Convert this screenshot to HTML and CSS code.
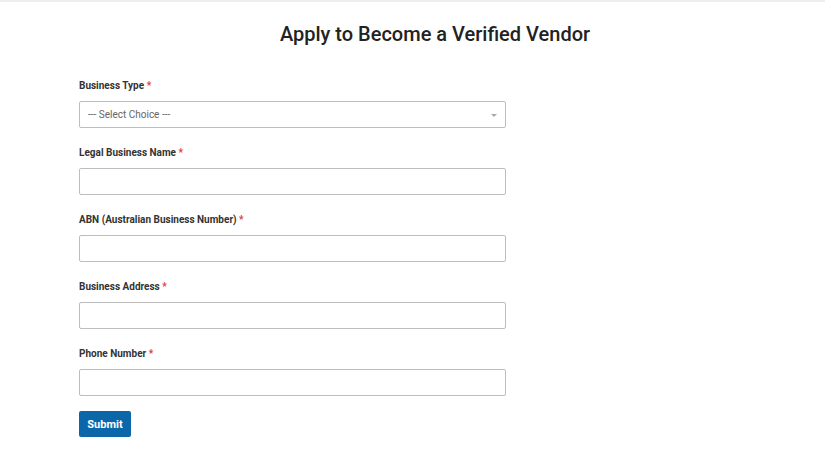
FILE: index.html
```html
<!DOCTYPE html>
<html lang="en">
<head>
<meta charset="utf-8">
<link rel="stylesheet" href="styles.css">
</head>
<body>
<div class="topline"></div>
<main class="page">
  <h1 class="title">Apply to Become a Verified Vendor</h1>
  <form class="form">
    <div class="field">
      <label class="label">Business Type <span class="req">*</span></label>
      <div class="select">
        <span class="select-text">--- Select Choice ---</span>
        <span class="caret"></span>
      </div>
    </div>
    <div class="field">
      <label class="label">Legal Business Name <span class="req">*</span></label>
      <input class="input" type="text">
    </div>
    <div class="field">
      <label class="label">ABN (Australian Business Number) <span class="req">*</span></label>
      <input class="input" type="text">
    </div>
    <div class="field">
      <label class="label">Business Address <span class="req">*</span></label>
      <input class="input" type="text">
    </div>
    <div class="field">
      <label class="label">Phone Number <span class="req">*</span></label>
      <input class="input" type="text">
    </div>
    <button class="submit" type="button">Submit</button>
  </form>
</main>
</body>
</html>
```
FILE: styles.css
```css
html, body {
  margin: 0;
  padding: 0;
  background: #fff;
  font-family: Roboto, "Liberation Sans", sans-serif;
  color: #333;
}
.topline {
  height: 2px;
  background: #eeeeee;
}
.page {
  padding: 0 34px 0 79px;
}
.title {
  margin: 20px 0 0;
  text-align: center;
  font-size: 20px;
  font-weight: 500;
  color: #222;
  line-height: 24px;
}
.form {
  width: 427px;
  margin-top: 33px;
  display: flex;
  flex-direction: column;
}
.field {
  display: flex;
  flex-direction: column;
  margin-bottom: 18px;
}
.label {
  font-size: 10px;
  font-weight: 700;
  line-height: 14px;
  color: #333;
  margin-bottom: 8px;
}
.req {
  color: #e0393e;
}
.input, .select {
  box-sizing: border-box;
  width: 427px;
  height: 27px;
  border: 1px solid #bdbdbd;
  border-radius: 2px;
  background: #fff;
  margin: 0;
  padding: 0 8px;
}
.select {
  display: flex;
  align-items: center;
  justify-content: space-between;
}
.select-text {
  font-size: 10px;
  color: #666;
}
.caret {
  width: 0;
  height: 0;
  border-left: 3.5px solid transparent;
  border-right: 3.5px solid transparent;
  border-top: 3.5px solid #aaa;
  margin-right: 0;
  margin-top: 2px;
}
.submit {
  align-self: flex-start;
  margin-top: -3px;
  width: 52px;
  height: 26px;
  border: none;
  border-radius: 2px;
  background: #0b67a9;
  color: #fff;
  font-family: Roboto, "Liberation Sans", sans-serif;
  font-size: 11px;
  font-weight: 700;
  padding: 0;
}
```
